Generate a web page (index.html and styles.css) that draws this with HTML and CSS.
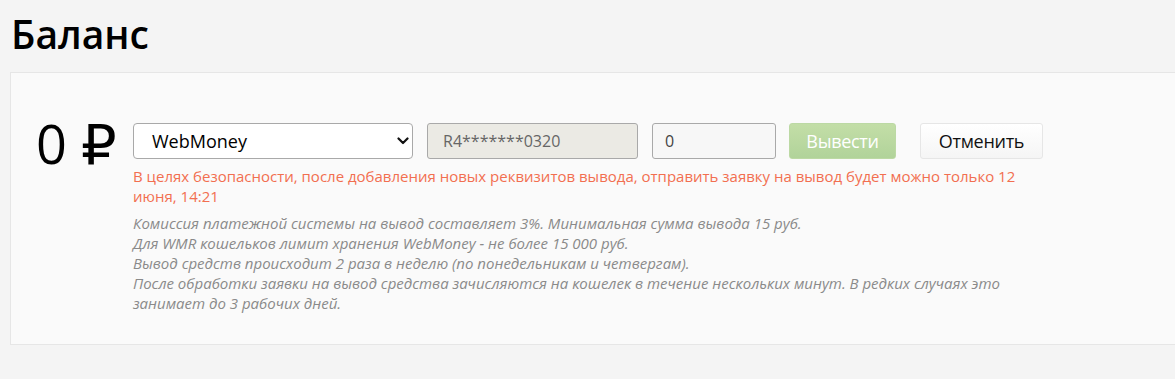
FILE: index.html
```html
<!DOCTYPE html>
<html lang="ru">
<head>
<meta charset="utf-8">
<title>Баланс</title>
<link rel="stylesheet" href="styles.css">
</head>
<body>
<h1 class="title">Баланс</h1>
<div class="card">
  <div class="balance-row">
    <div class="amount">0 <span class="rub">₽</span></div>
    <div class="form-col">
      <div class="controls">
        <div class="select">
          <span class="select-text">WebMoney</span>
          <svg class="chevron" width="12" height="8" viewBox="0 0 12 8"><path d="M1.5 1.5 L6 6 L10.5 1.5" fill="none" stroke="#111" stroke-width="2.2" stroke-linecap="round" stroke-linejoin="round"/></svg>
        </div>
        <div class="input readonly">R4*******0320</div>
        <div class="input amount-input">0</div>
        <button class="btn btn-green">Вывести</button>
        <button class="btn btn-cancel">Отменить</button>
      </div>
      <p class="warning">В целях безопасности, после добавления новых реквизитов вывода, отправить заявку на вывод будет можно только 12 июня, 14:21</p>
      <p class="note">Комиссия платежной системы на вывод составляет 3%. Минимальная сумма вывода 15 руб.<br>Для WMR кошельков лимит хранения WebMoney - не более 15 000 руб.<br>Вывод средств происходит 2 раза в неделю (по понедельникам и четвергам).<br>После обработки заявки на вывод средства зачисляются на кошелек в течение нескольких минут. В редких случаях это занимает до 3 рабочих дней.</p>
    </div>
  </div>
</div>
</body>
</html>
```
FILE: styles.css
```css
html, body {
  margin: 0;
  padding: 0;
  background: #f4f4f4;
  font-family: "Open Sans", "Noto Sans", sans-serif;
  color: #000;
  overflow: hidden;
}
.title {
  margin: 10px 0 14px 11px;
  font-size: 39px;
  line-height: 48px;
  font-weight: 600;
}
.card {
  margin-left: 10px;
  margin-right: -20px;
  background: #fafafa;
  border: 1px solid #e6e6e6;
  padding: 50px 0 0 25px;
  box-sizing: border-box;
  height: 273px;
}
.balance-row {
  display: flex;
  align-items: flex-start;
}
.amount {
  width: 97px;
  flex-shrink: 0;
  font-size: 54px;
  font-weight: 400;
  line-height: 40px;
  margin-top: 0;
  white-space: nowrap;
}
.rub {
  font-family: "DejaVu Sans", sans-serif;
  font-weight: 400;
  font-size: 56px;
}
.form-col {
  width: 920px;
  flex-shrink: 0;
}
.controls {
  display: flex;
  align-items: center;
  gap: 14px;
}
.controls > * {
  flex-shrink: 0;
}
.select {
  width: 280px;
  height: 36px;
  box-sizing: border-box;
  border: 1px solid #a9a9a9;
  border-radius: 4px;
  background: #fff;
  display: flex;
  align-items: center;
  justify-content: space-between;
  padding: 0 3px 0 18px;
  font-size: 18px;
}
.input {
  height: 36px;
  box-sizing: border-box;
  border: 1px solid #a9a9a9;
  border-radius: 3px;
  display: flex;
  align-items: center;
  font-size: 16px;
  color: #555;
  padding-left: 15px;
}
.readonly {
  width: 211px;
  background: #ebeae4;
  color: #666;
}
.amount-input {
  width: 124px;
  background: #f7f7f7;
  padding-left: 12px;
  color: #444;
}
.btn {
  height: 36px;
  box-sizing: border-box;
  border-radius: 3px;
  font-family: "Open Sans", sans-serif;
  font-size: 18px;
  padding: 0;
  cursor: pointer;
}
.btn-green {
  width: 107px;
  margin-left: -1px;
  border: 1px solid #bcd9a4;
  background: linear-gradient(#c3dea7, #b1d39a);
  color: #fff;
  letter-spacing: -0.3px;
}
.btn-cancel {
  width: 123px;
  margin-left: 10px;
  border: 1px solid #e6e6e6;
  background: linear-gradient(#ffffff, #f5f5f5);
  color: #111;
  letter-spacing: -0.3px;
}
.warning {
  width: 890px;
  margin: 7px 0 0;
  font-size: 15px;
  line-height: 20px;
  color: #f26f50;
}
.note {
  width: 890px;
  margin: 7px 0 0;
  font-size: 15px;
  line-height: 20px;
  font-style: italic;
  color: #8a8a8a;
}
```
